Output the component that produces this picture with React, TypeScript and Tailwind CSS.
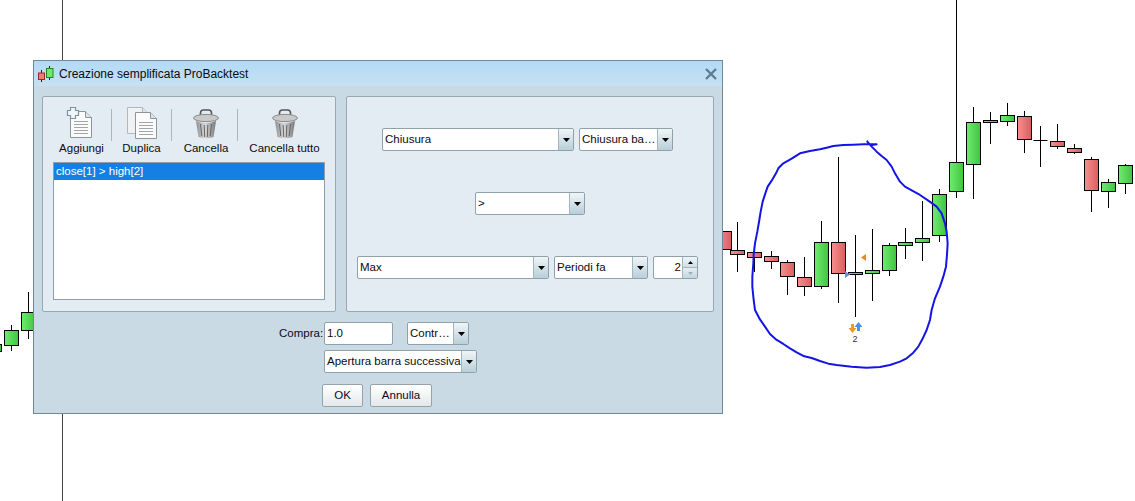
const candles = [
  { x: 724.5, hi: 231, lo: 249, t: 231.5, b: 249.5, up: false },
  { x: 737.5, hi: 222, lo: 272, t: 250.5, b: 254.5, up: false },
  { x: 754.5, hi: 246, lo: 272, t: 252.5, b: 257.5, up: false },
  { x: 771.5, hi: 251, lo: 269, t: 256.5, b: 261.5, up: false },
  { x: 787.5, hi: 260, lo: 295, t: 262.5, b: 276.5, up: false },
  { x: 804.5, hi: 257, lo: 296, t: 277.5, b: 286.5, up: false },
  { x: 821.5, hi: 221, lo: 289, t: 242.5, b: 286.5, up: true },
  { x: 838.5, hi: 157, lo: 303, t: 242.5, b: 273.5, up: false },
  { x: 855.5, hi: 235, lo: 317, t: 272.5, b: 274.5, up: true },
  { x: 872.5, hi: 229, lo: 301, t: 270.5, b: 273.5, up: true },
  { x: 889.5, hi: 243, lo: 276, t: 245.5, b: 270.5, up: true },
  { x: 905.5, hi: 228, lo: 259, t: 242.5, b: 245.5, up: true },
  { x: 922.5, hi: 201, lo: 261, t: 238.5, b: 242.5, up: true },
  { x: 939.5, hi: 189, lo: 242, t: 194.5, b: 235.5, up: true },
  { x: 956.5, hi: 0, lo: 198, t: 162.5, b: 191.5, up: true },
  { x: 973.5, hi: 107, lo: 199, t: 122.5, b: 164.5, up: true },
  { x: 990.5, hi: 112, lo: 144, t: 120.5, b: 122.5, up: true },
  { x: 1007.5, hi: 103, lo: 126, t: 115.5, b: 121.5, up: true },
  { x: 1024.5, hi: 111, lo: 153, t: 116.5, b: 139.5, up: false },
  { x: 1040.5, hi: 126, lo: 167, t: 140.5, b: 140.5, up: false },
  { x: 1057.5, hi: 124, lo: 149, t: 141.5, b: 146.5, up: false },
  { x: 1074.5, hi: 144, lo: 154, t: 148.5, b: 152.5, up: false },
  { x: 1091.5, hi: 157, lo: 212, t: 159.5, b: 190.5, up: false },
  { x: 1108.5, hi: 179, lo: 208, t: 182.5, b: 191.5, up: true },
  { x: 1125.5, hi: 164, lo: 194, t: 165.5, b: 183.5, up: true },
  { x: 28.5, hi: 292, lo: 339, t: 312.5, b: 330.5, up: true },
  { x: 11.5, hi: 325, lo: 351, t: 330.5, b: 345.5, up: true },
  { x: -5.5, hi: 340, lo: 355, t: 344.5, b: 351.5, up: true },
];

// hand drawn circle, in 3x coords from the reference
const stroke =
  "442,35 452,46 470,43 430,43 400,44 370,45 340,48 320,53 300,58 270,63 240,70 215,86 190,100 175,115 168,130 155,152 143,170 136,190 128,215 122,245 118,270 112,305 105,340 101,375 100,400 97,440 97,470 101,510 105,540 118,565 135,590 150,612 170,630 190,642 210,655 230,667 250,678 275,684 300,693 325,701 350,705 395,710 440,713 480,711 510,705 540,695 560,685 580,668 595,650 607,628 620,600 630,570 635,540 645,505 660,470 670,440 678,410 681,375 683,340 680,305 675,280 665,250 650,230 625,212 600,195 578,183 555,170 540,155 525,130 515,110 500,90 485,78 470,65 455,50 442,35";

const Arrow = ({ light }: { light?: boolean }) => (
  <svg width="7" height="4" viewBox="0 0 7 4" className="block">
    <path d="M0 0h7L3.5 4z" fill={light ? "#9fb0ba" : "#000"} />
  </svg>
);

const Combo = ({ label, className }: { label: string; className: string }) => (
  <div className={`flex h-[23px] overflow-hidden rounded-[2px] border border-[#8fa1aa] bg-white ${className}`}>
    <span className="flex-1 truncate pl-[2px] leading-[21px]">{label}</span>
    <span className="flex w-[15px] shrink-0 items-center justify-center border-l border-[#a5b5bd] bg-gradient-to-b from-[#f0f5f7] to-[#b8cfda]">
      <Arrow />
    </span>
  </div>
);

const Page = ({ x, y, light }: { x: number; y: number; light?: boolean }) => (
  <g transform={`translate(${x} ${y})`}>
    <path d="M.5.5h15l6 6v20H.5z" fill={light ? "#eef2f4" : "#fbfbfb"} stroke={light ? "#b4b8ba" : "#8f9496"} />
    <path d="M15.5.5v6h6" fill="#dfe3e5" stroke={light ? "#b4b8ba" : "#8f9496"} />
    {!light && <path d="M4 10.5h14M4 13.5h14M4 16.5h14M4 19.5h14M4 22.5h14" stroke="#a2a6a8" />}
  </g>
);

const Trash = () => (
  <svg width="32" height="34" viewBox="0 0 32 34" className="block">
    <defs>
      <linearGradient id="can" x1="0" x2="1" y1="0" y2="0">
        <stop offset="0" stopColor="#8e8e8e" />
        <stop offset="0.45" stopColor="#d8d8d8" />
        <stop offset="1" stopColor="#777" />
      </linearGradient>
    </defs>
    <path d="M10.5 11V7q0-3 3-3h5q3 0 3 3v4" fill="none" stroke="#555" strokeWidth="1.6" />
    <ellipse cx="16" cy="12" rx="12.5" ry="3.6" fill="#c9c9c9" stroke="#8a8a8a" />
    <path d="M6 15q10 4 20 0l-2.5 16q-7.5 2.5-15 0z" fill="url(#can)" />
    <path d="M10.5 18l1.3 12M14.2 19l.5 12M17.8 19l-.5 12M21.5 18l-1.3 12" stroke="#666" />
  </svg>
);

const ToolButton = ({ label, className, children }: { label: string; className: string; children: React.ReactNode }) => (
  <div className={`flex shrink-0 flex-col items-center ${className}`}>
    <div className="h-[35px]">{children}</div>
    <span className="leading-[14px] whitespace-nowrap">{label}</span>
  </div>
);

const Separator = () => <div className="mt-[3px] h-[32px] w-px shrink-0 bg-[#a9b7bf]" />;

const Button = ({ label, className }: { label: string; className: string }) => (
  <div className={`flex h-[23px] items-center justify-center rounded-[2px] border border-[#93a4ad] bg-gradient-to-b from-white to-[#e4e8eb] ${className}`}>
    {label}
  </div>
);

export default function App() {
  return (
    <div className="relative h-[501px] w-[1135px] overflow-hidden bg-white font-['Liberation_Sans',Arial,sans-serif] text-[11.5px] text-[#0b0b14]">
      {/* CHART */}
      <svg width="1135" height="501" className="absolute top-0 left-0">
        <defs>
          <linearGradient id="green" x1="0" x2="1" y1="0" y2="0">
            <stop offset="0" stopColor="#6fec6f" />
            <stop offset="1" stopColor="#40c440" />
          </linearGradient>
          <linearGradient id="red" x1="0" x2="1" y1="0" y2="0">
            <stop offset="0" stopColor="#f88f8f" />
            <stop offset="1" stopColor="#d95e5e" />
          </linearGradient>
        </defs>
        <path d="M62.5 0V501" stroke="#444" />
        {candles.map((c) => (
          <g key={c.x}>
            <path d={`M${c.x} ${c.hi}V${c.lo}`} stroke="#000" />
            {c.t === c.b ? (
              <path d={`M${c.x - 7} ${c.t}h14`} stroke="#000" />
            ) : (
              <rect x={c.x - 7} y={c.t} width="14" height={c.b - c.t} fill={c.up ? "url(#green)" : "url(#red)"} stroke="#000" />
            )}
          </g>
        ))}
        <path d="M866 254v7l-5-3.5z" fill="#ec8a10" />
        <path d="M845 271v7l5-3.5z" fill="#5b93dd" />
        <path d="M851 324h3v4h2.5l-4 5-4-5h2.500z" fill="#f09a1a" />
        <path d="M857 331h3v-4h2.500l-4-5-4 5h2.500z" fill="#4d8fe6" />
        <text x="855" y="342" textAnchor="middle" fontSize="9" fill="#333" fontFamily="Liberation Sans">2</text>
        <polyline
          points={stroke}
          transform="translate(720 130) scale(0.3333)"
          fill="none"
          stroke="#1414e6"
          strokeWidth="6"
          strokeLinejoin="round"
          strokeLinecap="round"
        />
      </svg>

      {/* DIALOG */}
      <div className="absolute top-[60px] left-[33px] h-[354px] w-[690px] border border-[#6f8797] bg-[#c9dae4]">
        <div className="flex h-[25px] items-center justify-between bg-gradient-to-b from-[#b2daf6] to-[#c6e1f1] pr-[5px] pl-[3px]">
          <div className="flex items-center gap-[5px]">
            <svg width="17" height="17" viewBox="0 0 17 17" className="block">
              <path d="M4.500 5v13M12.500 1v14" stroke="#222" />
              <rect x="1.500" y="8" width="6" height="6.500" fill="#f17a7a" stroke="#9c2a2a" />
              <rect x="9.500" y="3.500" width="6.500" height="9" fill="#6fe86f" stroke="#1f8a1f" />
            </svg>
            <span className="text-[12px] leading-none">Creazione semplificata ProBacktest</span>
          </div>
          <svg width="12" height="12" viewBox="0 0 12 12" className="block">
            <path d="M1 1l10 10M11 1L1 11" stroke="#5d7d92" strokeWidth="2.400" />
          </svg>
        </div>

        {/* PANELS */}
        <div className="mt-[10px] flex gap-[10px] pl-[8px]">
          <div className="h-[216px] w-[294px] rounded-[2px] border border-[#98a9b2] bg-[#e3ecf2] pt-[9px] pl-[9px]">
            <div className="flex">
              <ToolButton label="Aggiungi" className="w-[59px]">
                <svg width="32" height="34" viewBox="0 0 32 34" className="block">
                  <Page x={4} y={5} />
                  <path d="M4.500 1.500h5v3h3v5h-3v3h-5v-3h-3v-5h3z" fill="#f2f5f7" stroke="#7d93a0" strokeWidth="1.200" />
                </svg>
              </ToolButton>
              <Separator />
              <ToolButton label="Duplica" className="w-[59px]">
                <svg width="34" height="34" viewBox="0 0 34 34" className="block">
                  <Page x={2} y={1} light />
                  <Page x={10} y={6} />
                </svg>
              </ToolButton>
              <Separator />
              <ToolButton label="Cancella" className="w-[65px] pl-[3px]">
                <Trash />
              </ToolButton>
              <Separator />
              <ToolButton label="Cancella tutto" className="w-[93px]">
                <Trash />
              </ToolButton>
            </div>
            <div className="mt-[7px] ml-[1px] h-[138px] w-[272px] border border-[#8e9fa9] bg-white">
              <div className="h-[17px] bg-[#167fe3] pl-[2px] leading-[17px] text-white">close[1] &gt; high[2]</div>
            </div>
          </div>

          <div className="flex h-[216px] w-[368px] flex-col gap-[41px] rounded-[2px] border border-[#98a9b2] bg-[#e3ecf2] pt-[31px] pr-[5px]">
            <div className="flex justify-center gap-[5px]">
              <Combo label="Chiusura" className="w-[192px]" />
              <Combo label="Chiusura barra" className="w-[94px]" />
            </div>
            <div className="flex justify-center pl-[5px]">
              <Combo label=">" className="w-[110px]" />
            </div>
            <div className="flex justify-center gap-[5px]">
              <Combo label="Max" className="w-[192px]" />
              <Combo label="Periodi fa" className="w-[94px]" />
              <div className="flex h-[23px] w-[45px] overflow-hidden rounded-[2px] border border-[#8fa1aa] bg-white">
                <span className="flex-1 pr-[1px] text-right leading-[21px]">2</span>
                <div className="flex w-[15px] flex-col border-l border-[#a5b5bd]">
                  <span className="flex h-[11px] items-center justify-center border-b border-[#a5b5bd] bg-gradient-to-b from-[#f0f5f7] to-[#cfdee5]">
                    <svg width="5" height="3" viewBox="0 0 5 3" className="block"><path d="M0 3h5L2.500 0z" fill="#000" /></svg>
                  </span>
                  <span className="flex flex-1 items-center justify-center bg-gradient-to-b from-[#e6eef2] to-[#c3d6df]">
                    <svg width="5" height="3" viewBox="0 0 5 3" className="block"><path d="M0 0h5L2.500 3z" fill="#9fb0ba" /></svg>
                  </span>
                </div>
              </div>
            </div>
          </div>
        </div>

        {/* ORDER */}
        <div className="mt-[10px] pl-[245px]">
          <div className="flex items-center">
            <span className="w-[45px]">Compra:</span>
            <div className="h-[23px] w-[69px] rounded-[2px] border border-[#8fa1aa] bg-white pl-[2px] leading-[21px]">1.0</div>
            <Combo label="Contratti" className="ml-[14px] w-[62px]" />
          </div>
          <Combo label="Apertura barra successiva" className="mt-[5px] ml-[45px] w-[153px]" />
          <div className="mt-[11px] ml-[43px] flex gap-[7px]">
            <Button label="OK" className="w-[41px]" />
            <Button label="Annulla" className="w-[62px]" />
          </div>
        </div>
      </div>
    </div>
  );
}
